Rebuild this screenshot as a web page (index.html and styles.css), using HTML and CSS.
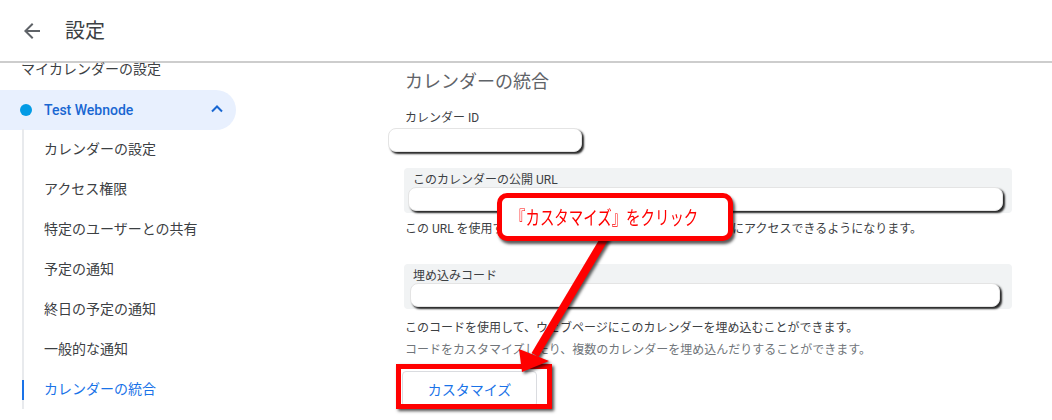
FILE: index.html
```html
<!DOCTYPE html>
<html lang="ja">
<head>
<meta charset="utf-8">
<title>設定</title>
<link rel="stylesheet" href="styles.css">
</head>
<body>
<div class="page">
  <header class="topbar">
    <svg class="back" width="24" height="24" viewBox="0 0 24 24"><path d="M20 11H7.83l5.59-5.59L12 4l-8 8 8 8 1.41-1.41L7.83 13H20v-2z" fill="#5f6368"/></svg>
    <h1 class="title">設定</h1>
  </header>
  <div class="body">
    <nav class="sidebar">
      <div class="side-title">マイカレンダーの設定</div>
      <div class="cal-row">
        <span class="dot"></span>
        <span class="cal-name">Test Webnode</span>
        <svg class="chev" width="12" height="8" viewBox="0 0 12 8"><path d="M1 6.5 6 1.5l5 5" fill="none" stroke="#1967d2" stroke-width="2"/></svg>
      </div>
      <ul class="subnav">
        <li>カレンダーの設定</li>
        <li>アクセス権限</li>
        <li>特定のユーザーとの共有</li>
        <li>予定の通知</li>
        <li>終日の予定の通知</li>
        <li>一般的な通知</li>
        <li class="active">カレンダーの統合</li>
      </ul>
    </nav>
    <main class="main">
      <h2 class="heading">カレンダーの統合</h2>
      <div class="label">カレンダー ID</div>
      <div class="mask mask-id"></div>
      <div class="field">
        <div class="field-label">このカレンダーの公開 URL</div>
        <div class="mask mask-wide"></div>
      </div>
      <p class="note">この URL を使用すると、ウェブブラウザからこのカレンダーにアクセスできるようになります。</p>
      <div class="field field-embed">
        <div class="field-label">埋め込みコード</div>
        <div class="mask mask-wide"></div>
      </div>
      <p class="desc">このコードを使用して、ウェブページにこのカレンダーを埋め込むことができます。<br><span class="sub">コードをカスタマイズしたり、複数のカレンダーを埋め込んだりすることができます。</span></p>
      <div class="btn-wrap">
        <button class="btn">カスタマイズ</button>
        <span class="highlight"></span>
      </div>
    </main>
  </div>
  <svg class="pointer" width="1052" height="420" viewBox="0 0 1052 420">
    <line x1="606" y1="236" x2="535" y2="355" stroke="#ff0000" stroke-width="8"/>
    <polygon points="519,349 549,361 522,372" fill="#ff0000"/>
  </svg>
  <div class="callout"><span class="callout-text">『カスタマイズ』をクリック</span></div>
</div>
</body>
</html>
```

FILE: styles.css
```css
* { box-sizing: border-box; }
html, body { margin: 0; padding: 0; background: #fff; }
body {
  font-family: Roboto, "Noto Sans CJK JP", sans-serif;
  color: #3c4043;
}
.page {
  position: relative;
  width: 1052px;
  height: 420px;
  overflow: hidden;
}
.topbar {
  height: 63px;
  border-bottom: 2px solid #cdcdcd;
  display: flex;
  align-items: center;
  padding-left: 20px;
}
.back { display: block; }
.title {
  margin: 0 0 0 21px;
  font-size: 20px;
  font-weight: 400;
  color: #3c4043;
  line-height: 24px;
}
.body { display: flex; }
.sidebar { width: 256px; flex: none; }
.side-title {
  height: 27px;
  padding-left: 21px;
  font-size: 14px;
  line-height: 13px;
}
.cal-row {
  height: 40px;
  width: 236px;
  background: #e8f0fe;
  border-radius: 0 20px 20px 0;
  display: flex;
  align-items: center;
  padding-left: 20px;
}
.dot {
  width: 12px; height: 12px;
  border-radius: 50%;
  background: #039be5;
  flex: none;
}
.cal-name {
  margin-left: 12px;
  font-size: 14px;
  font-weight: 500;
  color: #1967d2;
  flex: 1;
}
.chev { margin-right: 13px; margin-top: -2px; }
.subnav {
  list-style: none;
  margin: -1px 0 0 22px;
  padding: 0 0 0 20px;
  border-left: 2px solid #e8eaed;
}
.subnav li {
  height: 40px;
  line-height: 40px;
  font-size: 14px;
  color: #3c4043;
  position: relative;
}
.subnav li.active { color: #1a73e8; }
.subnav li.active::before {
  content: "";
  position: absolute;
  left: -22px;
  top: 11px;
  width: 2px;
  height: 20px;
  background: #1a73e8;
}
.main {
  flex: 1;
  padding: 7px 0 0 148px;
}
.heading {
  margin: 0;
  font-size: 18px;
  font-weight: 400;
  line-height: 24px;
  color: #5f6368;
  padding-left: 1px;
}
.label {
  margin-top: 16px;
  font-size: 12px;
  line-height: 16px;
  padding-left: 1px;
}
.mask {
  height: 24px;
  background: #fff;
  border: 1px solid #e4e4e4;
  border-radius: 8px;
  box-shadow: 2px 2px 2px rgba(0,0,0,0.85);
}
.mask-id {
  width: 194px;
  margin: 2px 0 0 -16px;
}
.field {
  margin-top: 16px;
  width: 608px;
  background: #f1f3f4;
  border-radius: 4px;
  padding: 5px 9px 2px 4px;
}
.field-label {
  font-size: 12px;
  line-height: 14px;
  padding-left: 5px;
}
.mask-wide { width: 595px; }
.note {
  margin: 8px 0 0;
  font-size: 12px;
  line-height: 16px;
  padding-left: 1px;
}
.field-embed {
  margin-top: 27px;
  padding-left: 6px;
  padding-right: 12px;
}
.field-embed .field-label { padding-left: 3px; }
.field-embed .mask-wide { width: 590px; }
.desc {
  margin: 8px 0 0;
  font-size: 12px;
  line-height: 22px;
  padding-left: 1px;
}
.sub { color: #70757a; }
.btn-wrap {
  position: relative;
  margin: 10px 0 0 -2px;
  width: 135px;
}
.btn {
  display: block;
  width: 135px;
  height: 36px;
  background: #fff;
  border: 1px solid #dadce0;
  border-radius: 4px;
  font-family: inherit;
  font-size: 14px;
  color: #1a73e8;
  padding: 0;
}
.highlight {
  position: absolute;
  left: -6px;
  top: -7px;
  width: 156px;
  height: 45px;
  border: 5px solid #ff0000;
  box-shadow: 2px 2px 3px rgba(0,0,0,0.7);
}
.pointer {
  position: absolute;
  left: 0;
  top: 0;
  pointer-events: none;
  filter: drop-shadow(2px 2px 1.5px rgba(0,0,0,0.65));
}
.callout {
  position: absolute;
  left: 497px;
  top: 193px;
  width: 236px;
  height: 48px;
  background: #fff;
  border: 5px solid #ff0000;
  border-radius: 10px;
  box-shadow: 2px 3px 3px rgba(0,0,0,0.65);
  padding: 7px 0 0 9px;
}
.callout-text {
  display: inline-block;
  font-size: 19px;
  line-height: 28px;
  font-weight: 400;
  color: #ff0000;
  white-space: nowrap;
  transform: scaleX(0.76);
  transform-origin: left center;
}
```
